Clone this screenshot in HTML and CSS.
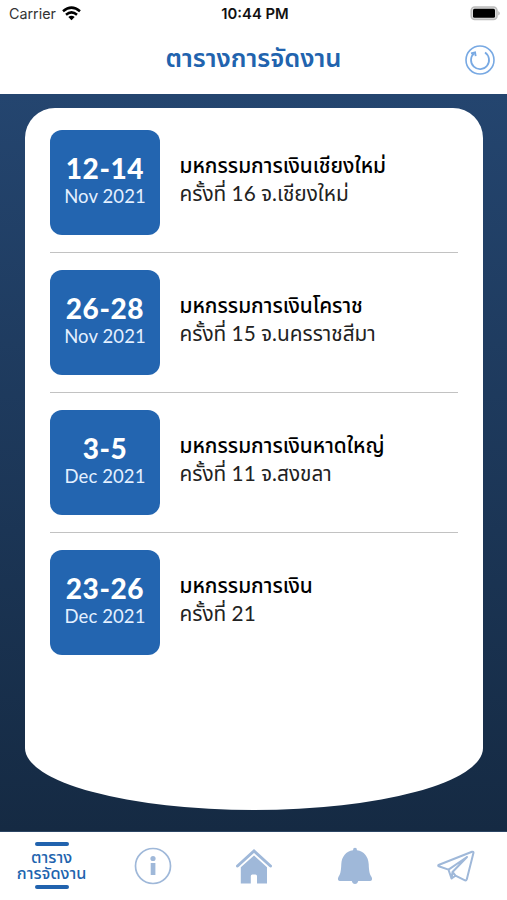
FILE: index.html
```html
<!DOCTYPE html>
<html lang="th">
<head>
<meta charset="utf-8">
<meta name="viewport" content="width=device-width, initial-scale=1">
<title>ตารางการจัดงาน</title>
<link rel="stylesheet" href="styles.css">
</head>
<body>
<div class="app">
  <div class="status">
    <div class="carrier"><span>Carrier</span>
      <svg width="19" height="15" viewBox="0 0 19 15"><g fill="none" stroke="#000" stroke-width="2.5"><path d="M1 5.2Q9.5-2 18 5.2"/><path d="M4 8.7Q9.5 4 15 8.7"/></g><path d="M6.3 11Q9.5 8.6 12.7 11L9.5 14.3Z"/></svg>
    </div>
    <time class="clock">10:44 PM</time>
    <svg class="battery" width="31" height="15" viewBox="0 0 31 15"><rect x="1.2" y="1" width="25.8" height="12.4" rx="3.5" fill="#ddd" stroke="#bcbcbc" stroke-width="1.5"/><rect x="3" y="2.8" width="22" height="9" rx="1.5"/><path d="M28.4 5Q31 7.3 28.4 9.6Z" fill="#aaa"/></svg>
  </div>
  <header class="header">
    <h1 class="title"><span>ตารางการจัดงาน</span></h1>
    <svg class="refresh" width="30" height="30" viewBox="0 0 30 30" fill="none" stroke="#78a9e3" stroke-width="1.6"><circle cx="15" cy="15" r="14"/><path d="M20 7.6A9 9 0 1 1 9 8.4M6 8.3L10.1 7.4L10.7 11.2" stroke-width="1.8"/></svg>
  </header>
  <main class="stage">
    <section class="card">
      <article class="event">
        <div class="date"><b class="days">12-14</b><span class="month">Nov 2021</span></div>
        <div class="info"><h2 class="name"><span>มหกรรมการเงินเชียงใหม่</span></h2><p class="place"><span>ครั้งที่ 16 จ.เชียงใหม่</span></p></div>
      </article>
      <article class="event">
        <div class="date"><b class="days">26-28</b><span class="month">Nov 2021</span></div>
        <div class="info"><h2 class="name"><span>มหกรรมการเงินโคราช</span></h2><p class="place"><span>ครั้งที่ 15 จ.นครราชสีมา</span></p></div>
      </article>
      <article class="event">
        <div class="date"><b class="days">3-5</b><span class="month">Dec 2021</span></div>
        <div class="info"><h2 class="name"><span>มหกรรมการเงินหาดใหญ่</span></h2><p class="place"><span>ครั้งที่ 11 จ.สงขลา</span></p></div>
      </article>
      <article class="event">
        <div class="date"><b class="days">23-26</b><span class="month">Dec 2021</span></div>
        <div class="info"><h2 class="name"><span>มหกรรมการเงิน</span></h2><p class="place"><span>ครั้งที่ 21</span></p></div>
      </article>
    </section>
  </main>
  <nav class="tabs">
    <a class="tab active"><span>ตาราง</span><span>การจัดงาน</span></a>
    <a class="tab"><svg width="38" height="38" viewBox="0 0 38 38"><circle cx="19" cy="19" r="17.5" fill="none" stroke="#9fb8d9" stroke-width="1.7"/><circle cx="19" cy="11.5" r="2.6"/><rect x="16.7" y="16" width="4.7" height="12"/></svg></a>
    <a class="tab"><svg width="38" height="38" viewBox="0 0 38 38"><path d="M2.5 19L19 4L35.5 19" fill="none" stroke="#9fb8d9" stroke-width="3" stroke-linecap="round" stroke-linejoin="miter"/><path d="M5.8 20.3L19 8.5L32 20.3V36.5H22V29Q22 27.5 20.5 27.5H17.3Q15.8 27.5 15.8 29V36.5H5.8Z"/></svg></a>
    <a class="tab"><svg width="38" height="38" viewBox="0 0 38 38"><path d="M19 .8Q21 .8 21 3.2C28 4.2 32.3 9.5 32.7 17C33 25 33.7 27 35.7 30.2Q37 33.5 34 34H22.2Q21.5 37 19 37T15.8 34H4Q1 33.5 2.3 30.2C4.3 27 5 25 5.3 17C5.7 9.5 10 4.2 17 3.2Q17 .8 19 .8Z"/></svg></a>
    <a class="tab"><svg width="38" height="38" viewBox="0 0 38 38" fill="none" stroke="#9fb8d9" stroke-width="2" stroke-linejoin="round" stroke-linecap="round"><path d="M1.5 18Q.8 18.7 1.8 19.2L11.5 22.6L14.5 31.5L18.5 28.7L28 33.3Q29.3 33.7 29.8 32.2L36.5 5.7Q36.6 4.5 35 4.8ZM11.5 22.6L30 10M30 10L15.5 25L14.5 31.5M15.5 25L18.5 28.7"/></svg></a>
  </nav>
</div>
</body>
</html>
```
FILE: styles.css
```css
* { box-sizing: border-box; }
body { margin: 0; background: #fff; font-family: "Noto Sans", "Noto Sans Thai", "Open Sans", sans-serif; }
.app { width: 507px; height: 900px; display: flex; flex-direction: column; overflow: hidden; }
.status { height: 27px; padding: 0 6px 0 9px; display: grid; grid-template-columns: 1fr auto 1fr; align-items: center; font-family: Inter, sans-serif; }
.carrier { display: flex; align-items: center; gap: 6px; font-size: 14.3px; color: #333; }
.clock { font-size: 14.8px; font-weight: 600; color: #111; }
.battery { justify-self: end; }
.header { height: 66.5px; padding: 0 12px; display: grid; grid-template-columns: 30px 1fr 30px; align-items: center; }
.title { grid-column: 2; margin: -7px 0 0; text-align: center; font-size: 25.5px; line-height: 36px; font-weight: 600; color: #2163ae; white-space: nowrap; }
.refresh { margin-top: -1px; }
.stage { height: 738px; flex: none; padding: 14.7px 24.5px 0 25px; background: linear-gradient(#24456f, #152a43); border-bottom: 1px solid #2c4564; }
.card { height: 701.8px; padding: 22px 25px; background: #fff; border-radius: 30px 30px 50% 50% / 30px 30px 62px 62px; }
.event { height: 140px; display: flex; gap: 19.5px; position: relative; }
.event:not(:last-child)::after { content: ""; position: absolute; left: 0; right: 0; top: 122px; height: 1px; background: #c2c2c2; }
.date { width: 110px; height: 105px; border-radius: 12px; background: #2365b0; color: #fff; display: flex; flex-direction: column; align-items: center; padding-top: 21px; }
.days { font-family: Lato, "Noto Sans", sans-serif; font-size: 28px; line-height: 34px; letter-spacing: .6px; font-weight: 900; white-space: nowrap; }
.month { font-family: Lato, "Noto Sans", sans-serif; font-size: 18.5px; line-height: 23px; letter-spacing: .1px; color: #e4f0ff; white-space: nowrap; }
.info { padding-top: 20.5px; white-space: nowrap; }
.name, .place { margin: 0; height: 28px; line-height: 28px; font-size: 20.8px; color: #222; }
.name { font-weight: 500; color: #000; }
.place { font-family: Lato, "Noto Sans", "Noto Sans Thai", sans-serif; font-weight: 400; }
.tabs { height: 68.5px; display: grid; grid-template-columns: repeat(5, 1fr); padding-left: 1px; }
.tab { display: flex; align-items: center; justify-content: center; fill: #9fb8d9; }
.active { flex-direction: column; color: #2163ae; font-size: 16.3px; line-height: 15.5px; font-weight: 500; white-space: nowrap; }
.active::before, .active::after { content: ""; width: 34px; height: 4px; border-radius: 2px; background: #2163ae; }
.active::before { margin-bottom: 4px; }
.active::after { margin-top: 4px; }
```
